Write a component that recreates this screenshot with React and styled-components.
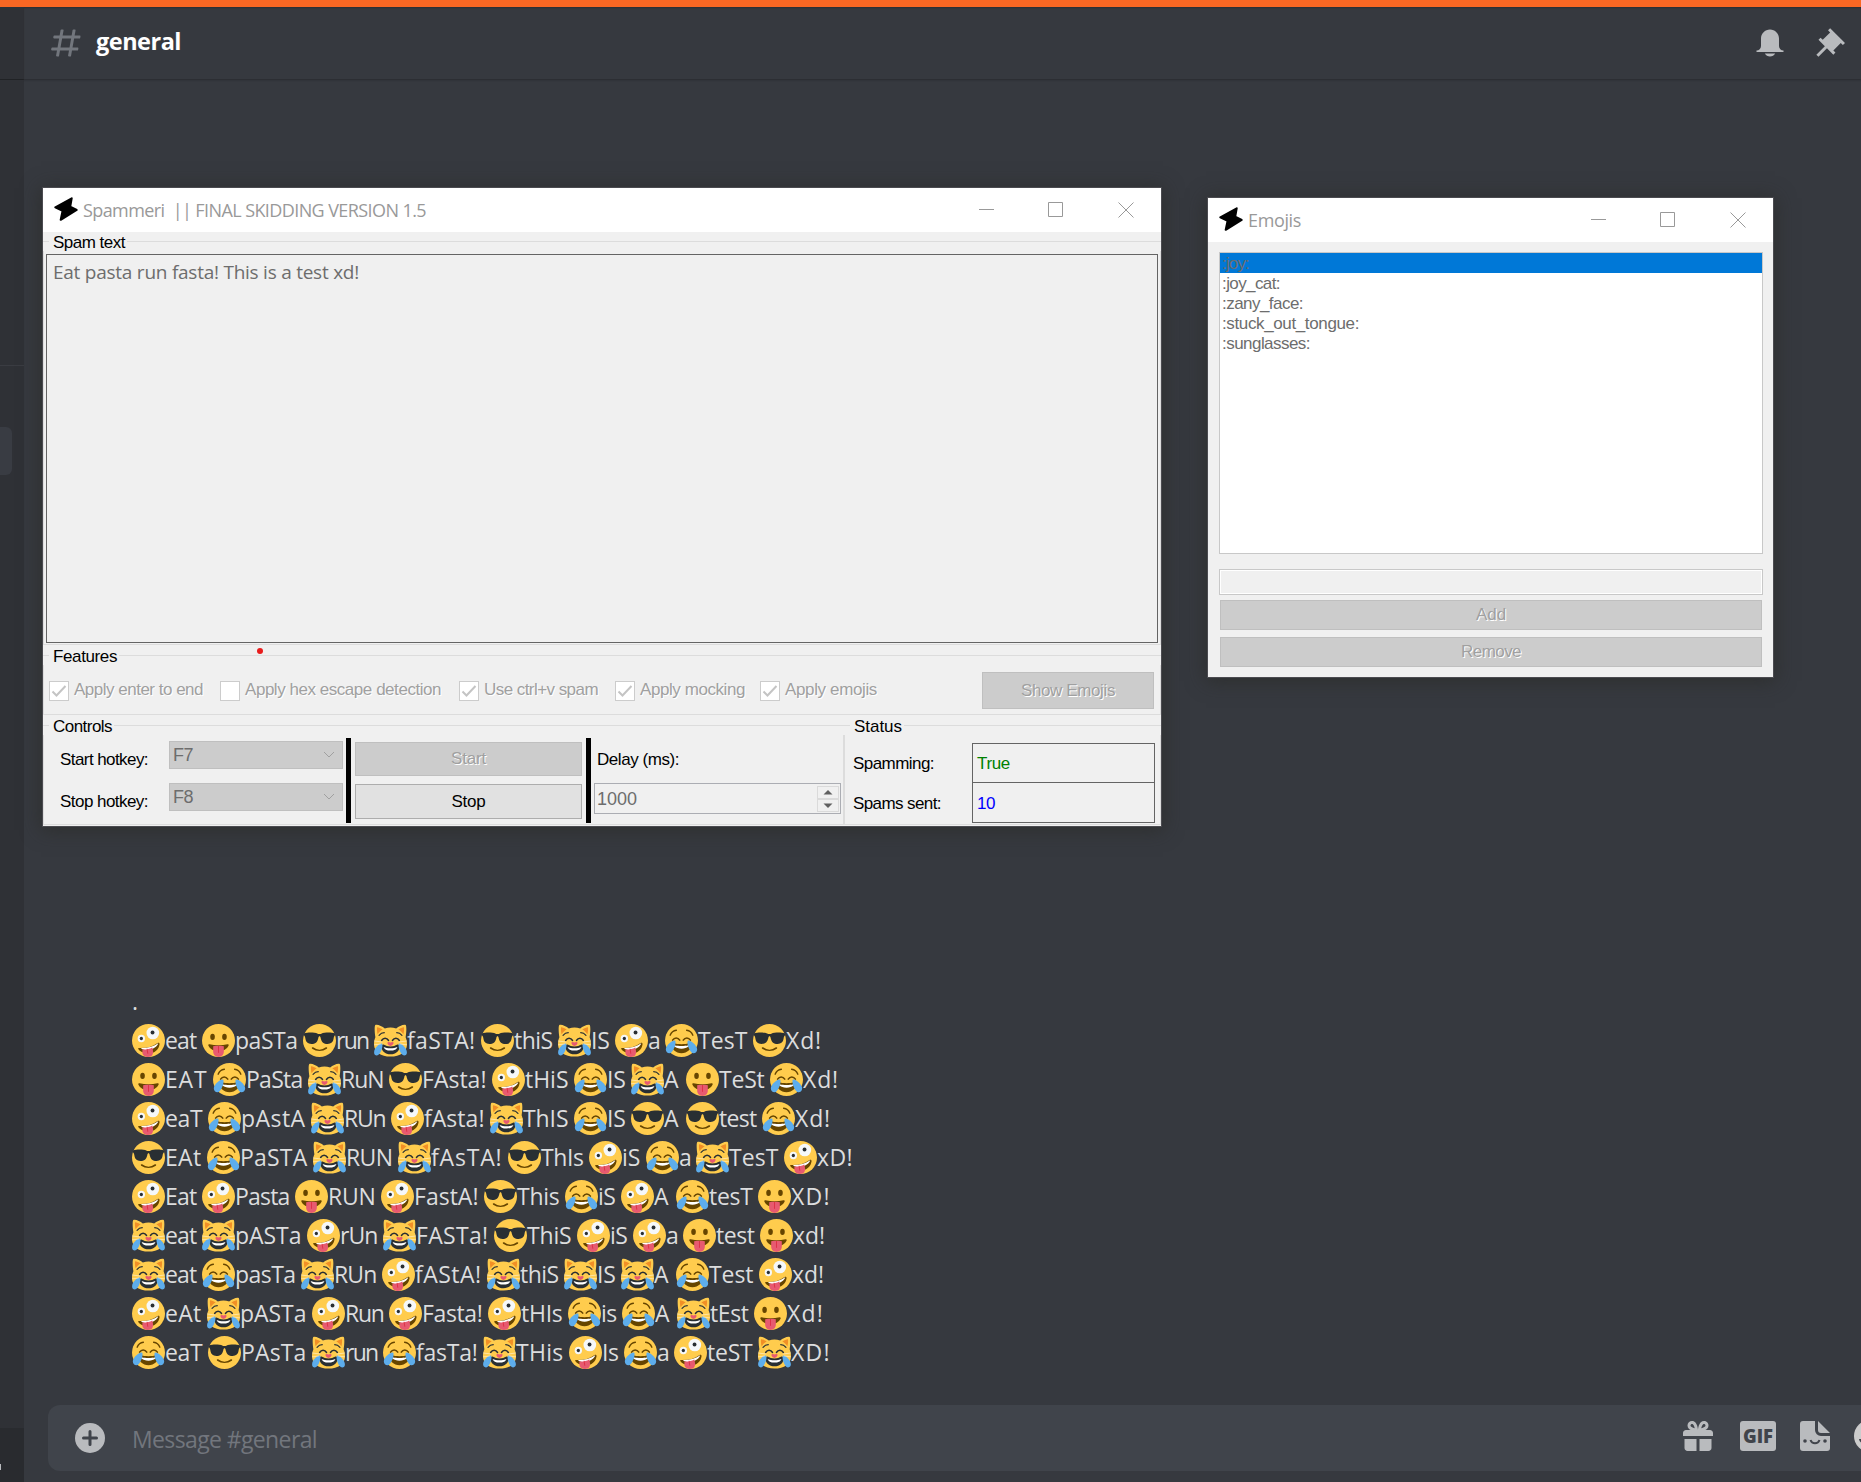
import React, { useLayoutEffect, useRef, useState } from "react";
import styled, { createGlobalStyle } from "styled-components";

const UI = `"Liberation Sans", Arial, sans-serif`;
const HUMANIST = `"Open Sans", "Noto Sans", sans-serif`;

const Global = createGlobalStyle`
  *, *::before, *::after { box-sizing: border-box; }
  html, body { margin: 0; padding: 0; background: #36393f; overflow: hidden; }
`;

/* ---------- text that is tracked to a given width ---------- */
const FitBox = styled.span`
  display: inline-block;
  white-space: pre;
`;

function Fit({ w, children, ...rest }) {
  const ref = useRef(null);
  const [spacing, setSpacing] = useState(0);
  useLayoutEffect(() => {
    const natural = ref.current.getBoundingClientRect().width;
    setSpacing((w - natural) / String(children).length);
  }, [w, children]);
  return (
    <FitBox ref={ref} style={{ letterSpacing: spacing }} {...rest}>
      {children}
    </FitBox>
  );
}

/* ---------- chat shell ---------- */
const Screen = styled.div`
  position: relative;
  width: 1861px;
  height: 1482px;
  display: flex;
  flex-direction: column;
  overflow: hidden;
  background: #36393f;
  font-family: ${HUMANIST};
`;
const Accent = styled.div`
  flex: none;
  height: 7px;
  background: #f96723;
`;
const Columns = styled.div`
  flex: 1;
  display: flex;
  min-height: 0;
`;
const Sidebar = styled.aside`
  flex: none;
  width: 24px;
  display: flex;
  flex-direction: column;
  background: #2f3136;
`;
const SideHeader = styled.div`
  height: 73px;
  border-bottom: 1px solid #202225;
`;
const SideSection = styled.div`
  height: 286px;
  border-bottom: 1px solid #3a3c42;
`;
const SideItem = styled.div`
  width: 12px;
  height: 48px;
  margin-top: 61px;
  border-radius: 0 6px 6px 0;
  background: #393c43;
`;
const SideUser = styled.div`
  height: 54px;
  margin-top: auto;
  padding-top: 36px;
  background: #292b2f;
`;
const SideUserTag = styled.div`
  width: 1px;
  height: 6px;
  background: #b9bbbe;
`;
const Main = styled.main`
  flex: 1;
  min-width: 0;
  display: flex;
  flex-direction: column;
`;
const Header = styled.header`
  flex: none;
  height: 72px;
  display: flex;
  align-items: flex-start;
  padding: 18px 13px 0 24px;
  box-shadow: 0 1px 0 #2c2e33, 0 2px 1px #31343a, inset 0 2px 2px -1px #2b2d31;
`;
const ChannelName = styled.h1`
  flex: 1;
  margin: -4px 0 0 12px;
  font-size: 23.5px;
  font-weight: 700;
  line-height: 40px;
  color: #fff;
`;
const HeaderIcons = styled.div`
  display: flex;
  gap: 24px;
  color: #b9bbbe;
`;
const Glyph = styled.svg`
  display: block;
  flex: none;
  width: ${(p) => p.$size || 36}px;
  height: ${(p) => p.$size || 36}px;
  color: ${(p) => p.$color || "inherit"};
  fill: currentColor;
`;

const Messages = styled.section`
  flex: 1;
  display: flex;
  flex-direction: column;
  justify-content: flex-end;
  padding: 0 0 33px 108px;
`;
const Line = styled.div`
  display: flex;
  align-items: center;
  height: 39px;
  font-size: 23px;
  line-height: 39px;
  color: #dcddde;
`;
const Token = styled.span`
  display: flex;
  align-items: center;
  flex: none;
  width: ${(p) => p.$w}px;
`;
const EmojiSvg = styled.svg`
  display: block;
  flex: none;
  width: 33px;
  height: 33px;
`;

const Composer = styled.div`
  flex: none;
  height: 66px;
  margin: 0 -20px 11px 24px;
  display: flex;
  align-items: center;
  border-radius: 12px;
  background: #40444b;
  padding-left: 27px;
  color: #b9bbbe;
`;
const PlusButton = styled.div`
  width: 30px;
  height: 30px;
  margin-top: 0;
`;
const Placeholder = styled.div`
  flex: 1;
  margin-left: 27px;
  font-size: 23px;
  line-height: 32px;
  padding-top: 1px;
  color: #72767d;
`;
const ComposerIcons = styled.div`
  display: flex;
  align-items: center;
  gap: 24px;
  width: 198px;
  margin-top: -4px;
`;
const GifBadge = styled.div`
  flex: none;
  width: 36px;
  height: 30px;
  margin-left: 3px;
  border-radius: 3px;
  background: #b9bbbe;
  color: #40444b;
  text-align: center;
  font-size: 18.5px;
  font-weight: 800;
  line-height: 30px;
`;

/* ---------- desktop windows ---------- */
const Window = styled.div`
  position: absolute;
  left: ${(p) => p.$x}px;
  top: ${(p) => p.$y}px;
  width: ${(p) => p.$w}px;
  height: ${(p) => p.$h}px;
  display: flex;
  flex-direction: column;
  background: #f0f0f0;
  font-family: ${UI};
  font-size: 17px;
  line-height: 20px;
  color: #000;
  box-shadow: 0 0 0 1px #4b4b50, 0 2px 18px 2px rgba(40, 40, 36, 0.62);
`;
const TitleBar = styled.div`
  flex: none;
  height: 44px;
  display: flex;
  background: #fff;
  padding: 0 0 0 11px;
  color: #999;
`;
const TitleIcon = styled.svg`
  width: 24px;
  height: 24px;
  margin-top: 9px;
`;
const Title = styled.div`
  flex: 1;
  margin: 10px 0 0 5px;
  font-family: ${HUMANIST};
  font-size: 18px;
  line-height: 24px;
  color: #999;
`;
const Caption = styled.svg`
  display: block;
  width: 16px;
  height: 16px;
  margin: 14px 0 0 ${(p) => p.$gap || 53}px;
  fill: none;
  stroke: #999;
  stroke-width: 1;
`;
const Captions = styled.div`
  display: flex;
  padding-right: 27px;
`;

const Group = styled.div`
  display: flex;
  flex-direction: column;
  width: ${(p) => (p.$w ? p.$w + "px" : "auto")};
  margin-top: ${(p) => p.$mt || 0}px;
`;
const GroupHead = styled.div`
  display: flex;
  align-items: center;
  height: 19px;
  line-height: 19px;
  &::before {
    content: "";
    width: 6px;
    height: 1px;
    background: #dcdcdc;
  }
  &::after {
    content: "";
    flex: 1;
    height: 1px;
    background: #dcdcdc;
  }
`;
const Legend = styled.div`
  padding: 1px 2px 0 4px;
  height: 20px;
`;
const GroupBody = styled.div`
  display: flex;
  height: ${(p) => p.$h}px;
  padding: ${(p) => p.$pad};
  border: 1px solid #dcdcdc;
  border-top: 0;
  align-items: ${(p) => p.$align || "stretch"};
`;
const SpamText = styled.div`
  flex: 1;
  border: 1px solid #646464;
  padding: 3px 0 0 6px;
  font-family: ${HUMANIST};
  font-size: 19px;
  line-height: 28px;
  color: #6d6d6d;
`;
const Check = styled.div`
  flex: none;
  display: flex;
  align-items: center;
  width: ${(p) => p.$w}px;
  color: #a0a0a0;
  text-shadow: 1px 1px 0 #fff;
`;
const CheckLabel = styled.div`
  padding-bottom: 2px;
`;
const CheckBox = styled.svg`
  width: 20px;
  height: 20px;
  margin-right: 5px;
  background: #fff;
  border: 1px solid #ccc;
  fill: none;
  stroke: #c4c4c4;
  stroke-width: 2;
`;
const Button = styled.div`
  flex: none;
  display: flex;
  align-items: center;
  justify-content: center;
  width: ${(p) => p.$w}px;
  height: ${(p) => p.$h}px;
  margin-left: ${(p) => p.$ml || 0};
  border: 1px solid ${(p) => (p.$enabled ? "#adadad" : "#bfbfbf")};
  background: ${(p) => (p.$enabled ? "#e1e1e1" : "#cccccc")};
  color: ${(p) => (p.$enabled ? "#000" : "#a0a0a0")};
  text-shadow: ${(p) => (p.$enabled ? "none" : "1px 1px 0 #fff")};
`;
const BottomRow = styled.div`
  display: flex;
`;
const Hotkeys = styled.div`
  display: flex;
  flex-direction: column;
  gap: 14px;
  padding-top: 6px;
`;
const HotkeyRow = styled.div`
  display: flex;
  height: 28px;
`;
const HotkeyLabel = styled.div`
  width: 109px;
  padding-top: 9px;
`;
const Combo = styled.div`
  width: 174px;
  height: 28px;
  display: flex;
  justify-content: space-between;
  align-items: center;
  padding: 0 7px 0 3px;
  border: 1px solid #bfbfbf;
  background: #ccc;
  font-size: 18px;
  color: #6d6d6d;
`;
const Chevron = styled.svg`
  width: 12px;
  height: 8px;
  fill: none;
  stroke: #a0a0a0;
`;
const Divider = styled.div`
  width: 5px;
  height: 85px;
  margin: 3px 4px 0 3px;
  background: #000;
`;
const Buttons = styled.div`
  display: flex;
  flex-direction: column;
  gap: 8px;
  padding: 7px 1px 0 0;
`;
const Delay = styled.div`
  padding-top: 15px;
  margin-left: -1px;
`;
const DelayLabel = styled.div`
  padding-left: 3px;
  height: 33px;
`;
const Spinner = styled.div`
  display: flex;
  align-items: center;
  justify-content: space-between;
  width: 247px;
  height: 31px;
  padding: 0 1px 0 2px;
  border: 1px solid #abadb3;
  font-size: 18px;
  color: #6d6d6d;
`;
const SpinButtons = styled.div`
  display: flex;
  flex-direction: column;
`;
const SpinButton = styled.svg`
  width: 22px;
  height: 13px;
  border: 1px solid #dadada;
  fill: #606060;
`;
const StatusRows = styled.div`
  display: flex;
  flex-direction: column;
  padding: 8px 0 0 8px;
`;
const StatusRow = styled.div`
  display: flex;
  align-items: center;
  height: ${(p) => p.$h}px;
  margin-bottom: -1px;
`;
const StatusLabel = styled.div`
  width: 119px;
  padding-top: 2px;
`;
const StatusValue = styled.div`
  display: flex;
  align-items: center;
  width: 183px;
  height: 100%;
  padding: 2px 0 0 4px;
  border: 1px solid #646464;
  color: ${(p) => p.$color};
`;
const RedDot = styled.div`
  position: absolute;
  left: 214px;
  top: 460px;
  width: 6px;
  height: 6px;
  border-radius: 50%;
  background: #e81c1c;
`;

const EmojiBody = styled.div`
  display: flex;
  flex-direction: column;
  padding: 10px 10px 0 11px;
`;
const List = styled.div`
  height: 302px;
  border: 1px solid #c8c8c8;
  background: #fff;
`;
const Item = styled.div`
  height: 20px;
  line-height: 22px;
  padding-left: 2px;
  color: #6d6d6d;
  background: ${(p) => (p.$selected ? "#0078d7" : "transparent")};
`;
const Input = styled.div`
  height: 26px;
  margin: 15px 0 5px;
  border: 1px solid #c8c8c8;
  box-shadow: inset 0 0 0 1px #fff;
`;
const StackedButton = styled(Button)`
  margin: 0 1px 7px;
`;

/* ---------- emoji artwork ---------- */
const Face = () => <circle cx="18" cy="18" r="18" fill="#ffcc4d" />;

const EMOJI = {
  joy: (
    <>
      <Face />
      <g fill="none" stroke="#664500" strokeLinecap="round">
        <path d="M5.6 12.2c1.2-3 3.4-5 6.8-5.4M30.4 12.2c-1.2-3-3.4-5-6.8-5.4" strokeWidth="1.5" />
        <path d="M8.3 17.6c1-1.6 2.3-2.4 3.9-2.4s2.900.8 3.900 2.400M19.900 17.600c1-1.600 2.300-2.400 3.900-2.400s2.900.8 3.900 2.400" strokeWidth="1.700" />
      </g>
      <path fill="#664500" d="M18 22c-3.600 0-6-.4-9-1-.7-.1-2 0-2 2 0 4 4.600 9 11 9s11-5 11-9c0-2-1.300-2.100-2-2-3 .6-5.400 1-9 1z" />
      <path fill="#fff" d="M9 23s3 1 9 1 9-1 9-1-2 4-9 4-9-4-9-4z" />
      <path fill="#5dadec" d="M11.200 18.300c-1.300-2-10.400 4.200-10.300 9.600.1 2.600 1.700 4.100 3.900 4.100 4 0 7.900-10.700 6.400-13.700zM24.800 18.300c1.300-2 10.400 4.200 10.300 9.600-.1 2.600-1.700 4.100-3.900 4.100-4 0-7.900-10.700-6.400-13.700z" />
    </>
  ),
  cat: (
    <>
      <path fill="#ffcc4d" d="M1.200 1.300C2.800-.4 8.600 2.200 11.800 4.800a20 20 0 0 1 12.400 0C27.400 2.200 33.200-.4 34.800 1.300c.9 2.300.4 8.900-.3 13.200C35.600 17 36 19.500 36 22c0 8.600-7.500 13.500-18 13.500S0 30.600 0 22c0-2.500.4-5 1.500-7.500C.8 10.200.3 3.600 1.200 1.300z" />
      <path fill="#f18f26" d="M3.300 3.500c1.700 0 4.600 1.300 6.200 2.600-2 1-4.200 2.900-5.500 5-.7-2-1-5.400-.7-7.600zM32.700 3.500c-1.700 0-4.600 1.300-6.200 2.600 2 1 4.200 2.900 5.500 5 .7-2 1-5.400.7-7.600z" />
      <g fill="none" stroke="#292f33" strokeLinecap="round" strokeWidth="1.300">
        <path d="M5.500 12.400c1.700-2 3.500-2.900 5.700-2.900M30.500 12.400c-1.700-2-3.500-2.900-5.700-2.900" />
        <path d="M8.300 18c1-1.600 2.300-2.400 3.800-2.400s2.800.8 3.800 2.400M20.100 18c1-1.600 2.300-2.400 3.800-2.400s2.800.8 3.800 2.400" strokeWidth="1.600" />
      </g>
      <path fill="#292f33" d="M18 24.500c-3 0-5.500-1-7-1.900-1.500-.7-2.900.2-2.900 1.900 0 4.800 4 8.500 9.900 8.500s9.900-3.700 9.900-8.500c0-1.700-1.400-2.600-2.900-1.900-1.500.9-4 1.900-7 1.900z" />
      <path fill="#fff" d="M10.500 25c2 1 4.700 1.400 7.500 1.400s5.500-.4 7.500-1.400c-.5 2.500-3.500 4-7.500 4s-7-1.500-7.500-4z" />
      <path fill="#e75a70" d="M14.700 20.200c.5-1 2.300-.8 3.300 0 1-.8 2.800-1 3.300 0 .6 1.300-1.900 3.700-3.300 3.700s-3.900-2.400-3.300-3.700z" />
      <path fill="#5dadec" d="M8.900 21.600C7.600 20.200.3 25.500.1 30.700 0 33 1.300 34.300 3.100 34.300c3.800 0 7.200-9.900 5.800-12.700zM27.100 21.600c1.300-1.400 8.600 3.900 8.800 9.100.1 2.300-1.200 3.600-3 3.600-3.800 0-7.200-9.900-5.800-12.700z" />
      <path fill="none" stroke="#fff" strokeOpacity=".75" strokeWidth=".7" d="M0 18.500l9 1.200M0 22.800l8-1M36 18.500l-9 1.200M36 22.800l-8-1" />
    </>
  ),
  cool: (
    <>
      <Face />
      <path fill="none" stroke="#664500" strokeWidth="1.800" strokeLinecap="round" d="M10.500 26.200c4.500 3.300 10.500 3.300 15 0" />
      <path fill="#292f33" d="M1.500 10.200c3.500-1.300 11-1.200 14.500.3.900.4 3.100.4 4 0 3.500-1.500 11-1.600 14.500-.3.600.3.600 1.900.1 2.500-.8.700-.9 1.300-1.200 3.200-.6 4-2.600 5.800-6.600 5.800-4.200 0-6.400-1.900-7.400-6-.4-1.700-.7-2.300-1.400-2.300s-1 .6-1.400 2.300c-1 4.100-3.200 6-7.400 6-4 0-6-1.800-6.600-5.800-.3-1.900-.4-2.500-1.200-3.200-.5-.6-.5-2.200.1-2.500z" />
    </>
  ),
  tongue: (
    <>
      <Face />
      <ellipse cx="11.500" cy="14" rx="2.500" ry="3.500" fill="#664500" />
      <ellipse cx="24.500" cy="14" rx="2.500" ry="3.500" fill="#664500" />
      <path fill="#664500" d="M8.200 22.200c3.100.7 6.400 1 9.800 1s6.700-.3 9.800-1c1-.2 1.600.6 1.200 1.500-1.600 3.300-5.800 6.100-11 6.100S8.600 27 7 23.700c-.4-.9.2-1.700 1.200-1.500z" />
      <path fill="#e75a70" d="M12.200 24.200c3.700-.7 7.900-.7 11.600 0v6.200c0 3.200-2.600 5.600-5.800 5.600s-5.800-2.400-5.800-5.600z" />
      <path stroke="#dd2e44" strokeWidth="1" strokeLinecap="round" d="M18 24.500v6.500" />
    </>
  ),
  zany: (
    <>
      <Face />
      <path fill="#664500" d="M7.800 26.200c7.900.3 14.400-1.500 20.200-5.600 1-.7 2.200.1 2.100 1.300-.8 6.700-6.300 10.600-12.600 10.100-5.500-.4-9-2.400-10.500-4.500-.5-.8-.1-1.400.8-1.300z" />
      <path fill="#fff" d="M9.800 26.200c7.400.1 13-1.500 18.800-5.300-.3 2.700-5.400 7.300-12.400 7.600-2.600.1-5.300-.7-6.400-2.300z" />
      <path fill="#e75a70" d="M11.300 27.800c3.600.4 7.600-.4 10.800-2.200.9 2.800 1.400 6 .1 8.200-1.100 1.800-3.500 2.300-5.700 2.200-2.700-.1-4.600-1.600-5.100-4z" />
      <path stroke="#dd2e44" strokeWidth="1" strokeLinecap="round" fill="none" d="M16.500 27.500l.7 4.500" />
      <circle cx="22.700" cy="9.800" r="6.900" fill="#f5f8fa" />
      <circle cx="22.400" cy="9.300" r="2.100" fill="#292f33" />
      <circle cx="10.200" cy="15.800" r="4" fill="#f5f8fa" />
      <circle cx="10.200" cy="15.800" r="1.800" fill="#292f33" />
    </>
  ),
};

function Emoji({ kind }) {
  return <EmojiSvg viewBox="0 0 36 36">{EMOJI[kind]}</EmojiSvg>;
}

/* each line: tokens [emoji, word, advance in px] */
const LINES = [
  [["zany", "eat", 70], ["tongue", "paSTa", 101], ["cool", "run", 71], ["cat", "faSTA!", 107], ["cool", "thiS", 77], ["cat", "IS", 57], ["zany", "a", 50], ["joy", "TesT", 88], ["cool", "Xd!", 73]],
  [["tongue", "EAT", 81], ["joy", "PaSta", 95], ["cat", "RuN", 81], ["cool", "FAsta!", 103], ["zany", "tHiS", 82], ["joy", "IS", 57], ["cat", "A", 55], ["tongue", "TeSt", 84], ["joy", "Xd!", 73]],
  [["zany", "eaT", 76], ["joy", "pAstA", 103], ["cat", "RUn", 80], ["zany", "fAsta!", 99], ["cat", "ThIS", 84], ["joy", "IS", 57], ["cool", "A", 55], ["cool", "test", 76], ["joy", "Xd!", 73]],
  [["cool", "EAt", 75], ["joy", "PaSTA", 106], ["cat", "RUN", 85], ["cat", "fAsTA!", 110], ["cool", "ThIs", 81], ["zany", "iS", 57], ["joy", "a", 50], ["cat", "TesT", 88], ["zany", "xD!", 73]],
  [["zany", "Eat", 70], ["zany", "Pasta", 93], ["tongue", "RUN", 86], ["zany", "FastA!", 103], ["cool", "This", 81], ["joy", "iS", 56], ["zany", "A", 55], ["joy", "tesT", 82], ["tongue", "XD!", 77]],
  [["cat", "eat", 70], ["cat", "pASTa", 105], ["zany", "rUn", 76], ["cat", "FASTa!", 111], ["cool", "ThiS", 83], ["zany", "iS", 56], ["zany", "a", 50], ["tongue", "test", 77], ["tongue", "xd!", 69]],
  [["cat", "eat", 70], ["joy", "pasTa", 99], ["cat", "RUn", 81], ["zany", "fAStA!", 105], ["cat", "thiS", 77], ["cat", "IS", 57], ["cat", "A", 55], ["joy", "Test", 83], ["zany", "xd!", 69]],
  [["zany", "eAt", 75], ["cat", "pASTa", 105], ["zany", "Run", 77], ["zany", "Fasta!", 99], ["zany", "tHIs", 80], ["joy", "is", 54], ["joy", "A", 55], ["cat", "tEst", 77], ["tongue", "Xd!", 74]],
  [["joy", "eaT", 76], ["cool", "PAsTa", 104], ["cat", "run", 71], ["joy", "fasTa!", 100], ["cat", "THis", 86], ["zany", "Is", 55], ["joy", "a", 50], ["zany", "teST", 84], ["cat", "XD!", 77]],
];

const CHECKS = [
  ["Apply enter to end", true, 171, 129],
  ["Apply hex escape detection", false, 239, 196],
  ["Use ctrl+v spam", true, 156, 114],
  ["Apply mocking", true, 145, 105],
  ["Apply emojis", true, 130, 92],
];

const NAMES = [
  [":joy:", 27],
  [":joy_cat:", 58],
  [":zany_face:", 81],
  [":stuck_out_tongue:", 137],
  [":sunglasses:", 88],
];

function WindowTitle({ text, width }) {
  return (
    <TitleBar>
      <TitleIcon viewBox="0 0 24 24">
        <path d="M17.700 1.300L1.300 10.300l7.300 3.500-1.900 9L22.700 13l-6.500-3.300z" fill="#000" stroke="#000" strokeWidth="2" strokeLinejoin="round" />
      </TitleIcon>
      <Title>
        <Fit w={width}>{text}</Fit>
      </Title>
      <Captions>
        <Caption viewBox="0 0 16 16"><path d="M0 7.500h15" /></Caption>
        <Caption viewBox="0 0 16 16"><path d="M.5.5h14v14H.5z" /></Caption>
        <Caption viewBox="0 0 16 16" $gap={54}><path d="M.5.5l15 15M15.500.5l-15 15" /></Caption>
      </Captions>
    </TitleBar>
  );
}

function ComboBox({ value }) {
  return (
    <Combo>
      <Fit w={20}>{value}</Fit>
      <Chevron viewBox="0 0 12 8"><path d="M1 1l5 5 5-5" /></Chevron>
    </Combo>
  );
}

function SpammerWindow() {
  return (
    <Window $x={43} $y={188} $w={1118} $h={638}>
      <WindowTitle text="Spammeri  || FINAL SKIDDING VERSION 1.5" width={343} />
      <Group>
        <GroupHead><Legend><Fit w={72}>Spam text</Fit></Legend></GroupHead>
        <GroupBody $h={394} $pad="3px 2px 1px">
          <SpamText><Fit w={306}>Eat pasta run fasta! This is a test xd!</Fit></SpamText>
        </GroupBody>
      </Group>
      <Group $mt={1}>
        <GroupHead><Legend><Fit w={64}>Features</Fit></Legend></GroupHead>
        <GroupBody $h={50} $pad="2px 6px 0 5px" $align="center">
          {CHECKS.map(([label, on, w, tw]) => (
            <Check key={label} $w={w}>
              <CheckBox viewBox="0 0 18 18">{on && <path d="M2.500 9.500l4 4 9-9.500" />}</CheckBox>
              <CheckLabel><Fit w={tw}>{label}</Fit></CheckLabel>
            </Check>
          ))}
          <Button $w={172} $h={37} $ml="auto"><Fit w={94}>Show Emojis</Fit></Button>
        </GroupBody>
      </Group>
      <BottomRow>
        <Group $w={801} $mt={1}>
          <GroupHead><Legend><Fit w={59}>Controls</Fit></Legend></GroupHead>
          <GroupBody $h={90} $pad="0 0 0 16px">
            <Hotkeys>
              <HotkeyRow>
                <HotkeyLabel><Fit w={88}>Start hotkey:</Fit></HotkeyLabel>
                <ComboBox value="F7" />
              </HotkeyRow>
              <HotkeyRow>
                <HotkeyLabel><Fit w={88}>Stop hotkey:</Fit></HotkeyLabel>
                <ComboBox value="F8" />
              </HotkeyRow>
            </Hotkeys>
            <Divider />
            <Buttons>
              <Button $w={227} $h={34}><Fit w={35}>Start</Fit></Button>
              <Button $w={227} $h={35} $enabled><Fit w={34}>Stop</Fit></Button>
            </Buttons>
            <Divider />
            <Delay>
              <DelayLabel><Fit w={82}>Delay (ms):</Fit></DelayLabel>
              <Spinner>
                <Fit w={40}>1000</Fit>
                <SpinButtons>
                  <SpinButton viewBox="0 0 20 11"><path d="M5.500 7.500L10 3l4.500 4.500z" /></SpinButton>
                  <SpinButton viewBox="0 0 20 11"><path d="M5.500 3.500L10 8l4.500-4.500z" /></SpinButton>
                </SpinButtons>
              </Spinner>
            </Delay>
          </GroupBody>
        </Group>
        <Group $w={317} $mt={1}>
          <GroupHead><Legend><Fit w={48}>Status</Fit></Legend></GroupHead>
          <GroupBody $h={90} $pad="0">
            <StatusRows>
              <StatusRow $h={40}>
                <StatusLabel><Fit w={81}>Spamming:</Fit></StatusLabel>
                <StatusValue $color="#008000"><Fit w={33}>True</Fit></StatusValue>
              </StatusRow>
              <StatusRow $h={41}>
                <StatusLabel><Fit w={88}>Spams sent:</Fit></StatusLabel>
                <StatusValue $color="#0000ff"><Fit w={18}>10</Fit></StatusValue>
              </StatusRow>
            </StatusRows>
          </GroupBody>
        </Group>
      </BottomRow>
      <RedDot />
    </Window>
  );
}

function EmojiWindow() {
  return (
    <Window $x={1208} $y={198} $w={565} $h={479}>
      <WindowTitle text="Emojis" width={53} />
      <EmojiBody>
        <List>
          {NAMES.map(([name, w], i) => (
            <Item key={name} $selected={i === 0}><Fit w={w}>{name}</Fit></Item>
          ))}
        </List>
        <Input />
        <StackedButton $w={542} $h={30}><Fit w={30}>Add</Fit></StackedButton>
        <StackedButton $w={542} $h={30}><Fit w={60}>Remove</Fit></StackedButton>
      </EmojiBody>
    </Window>
  );
}

export default function App() {
  return (
    <>
      <Global />
      <Screen>
        <Accent />
        <Columns>
          <Sidebar>
            <SideHeader />
            <SideSection />
            <SideItem />
            <SideUser><SideUserTag /></SideUser>
          </Sidebar>
          <Main>
            <Header>
              <Glyph viewBox="0 0 24 24" $color="#72767d">
                <path fillRule="evenodd" d="M5.88657 21C5.57547 21 5.3399 20.7189 5.39427 20.4126L6.00001 17H2.59511C2.28449 17 2.04905 16.7198 2.10259 16.4138L2.27759 15.4138C2.31946 15.1746 2.52722 15 2.77011 15H6.35001L7.41001 9H4.00511C3.69449 9 3.45905 8.71977 3.51259 8.41381L3.68759 7.41381C3.72946 7.17456 3.93722 7 4.18011 7H7.76001L8.39677 3.41262C8.43914 3.17391 8.64664 3 8.88907 3H9.87344C10.1845 3 10.4201 3.28107 10.3657 3.58738L9.76001 7H15.76L16.3968 3.41262C16.4391 3.17391 16.6466 3 16.8891 3H17.8734C18.1845 3 18.4201 3.28107 18.3657 3.58738L17.76 7H21.1649C21.4755 7 21.711 7.28023 21.6574 7.58619L21.4824 8.58619C21.4406 8.82544 21.2328 9 20.9899 9H17.41L16.35 15H19.7549C20.0655 15 20.301 15.2802 20.2474 15.5862L20.0724 16.5862C20.0306 16.8254 19.8228 17 19.5799 17H16L15.3632 20.5874C15.3209 20.8261 15.1134 21 14.8709 21H13.8866C13.5755 21 13.3399 20.7189 13.3943 20.4126L14 17H8.00001L7.36325 20.5874C7.32088 20.8261 7.11337 21 6.87094 21H5.88657ZM9.41045 9L8.35045 15H14.3504L15.4104 9H9.41045Z" />
              </Glyph>
              <ChannelName><Fit w={85}>general</Fit></ChannelName>
              <HeaderIcons>
                <Glyph viewBox="0 0 24 24">
                  <path d="M18 9V14C18 15.657 19.344 17 21 17V18H3V17C4.656 17 6 15.657 6 14V9C6 5.686 8.686 3 12 3C15.314 3 18 5.686 18 9ZM11.9999 21C10.5239 21 9.24793 20.19 8.55493 19H15.4449C14.7519 20.19 13.4759 21 11.9999 21Z" />
                </Glyph>
                <Glyph viewBox="0 0 24 24">
                  <path d="M22 12L12.101 2.10101L10.686 3.51401L12.101 4.92901L7.15096 9.87801V9.88001L5.73596 8.46501L4.32196 9.88001L8.56496 14.122L2.90796 19.778L4.32196 21.192L9.97896 15.536L14.222 19.778L15.636 18.364L14.222 16.95L19.171 12H19.172L20.586 13.414L22 12Z" />
                </Glyph>
              </HeaderIcons>
            </Header>
            <Messages>
              <Line>.</Line>
              {LINES.map((tokens, i) => (
                <Line key={i}>
                  {tokens.map(([kind, word, w], j) => (
                    <Token key={j} $w={w}>
                      <Emoji kind={kind} />
                      <Fit w={j === tokens.length - 1 ? w - 37 : w - 38.5}>{word}</Fit>
                    </Token>
                  ))}
                </Line>
              ))}
            </Messages>
            <Composer>
              <PlusButton>
                <Glyph viewBox="0 0 30 30" $size={30}>
                  <circle cx="15" cy="15" r="15" />
                  <path d="M15 8.500v13M8.500 15h13" stroke="#40444b" strokeWidth="3" strokeLinecap="round" />
                </Glyph>
              </PlusButton>
              <Placeholder><Fit w={185}>Message #general</Fit></Placeholder>
              <ComposerIcons>
                <Glyph viewBox="2 2 20 20" $size={30}>
                  <path fillRule="evenodd" d="M16.886 7.999H20C21.104 7.999 22 8.896 22 9.999V11.999H2V9.999C2 8.896 2.897 7.999 4 7.999H7.114C6.663 7.764 6.236 7.477 5.879 7.121C4.709 5.951 4.709 4.048 5.879 2.879C7.012 1.746 8.986 1.746 10.121 2.877C11.758 4.514 11.979 7.595 11.998 7.941L11.99 7.999H12.01L12.002 7.941C12.022 7.596 12.242 4.515 13.879 2.878C15.014 1.745 16.986 1.746 18.121 2.877C19.29 4.049 19.29 5.952 18.121 7.121C17.764 7.477 17.337 7.764 16.886 7.999ZM7.293 5.707C6.903 5.316 6.903 4.682 7.293 4.292C7.481 4.103 7.732 4 8 4C8.268 4 8.519 4.103 8.707 4.292C9.297 4.882 9.641 5.94 9.825 6.822C8.945 6.639 7.879 6.293 7.293 5.707ZM14.174 6.824C14.359 5.941 14.702 4.883 15.293 4.293C15.481 4.103 15.732 4 16 4C16.268 4 16.519 4.103 16.706 4.291C17.096 4.682 17.097 5.316 16.707 5.707C16.116 6.298 15.057 6.642 14.174 6.824ZM3 13.999V19.999C3 21.102 3.897 21.999 5 21.999H11V13.999H3ZM13 13.999V21.999H19C20.104 21.999 21 21.102 21 19.999V13.999H13Z" />
                </Glyph>
                <GifBadge>GIF</GifBadge>
                <Glyph viewBox="0 0 30 30" $size={30}>
                  <path d="M3 0h12v9a6 6 0 0 0 6 6h9v12a3 3 0 0 1-3 3H3a3 3 0 0 1-3-3V3a3 3 0 0 1 3-3zM18 0l12 12h-9a3 3 0 0 1-3-3z" />
                  <g fill="#40444b"><circle cx="5" cy="20" r="1.800" /><circle cx="25" cy="20" r="1.800" /></g>
                  <path d="M10.500 19c1.500 4.300 7.500 4.300 9 0" fill="none" stroke="#40444b" strokeWidth="2" />
                </Glyph>
                <Glyph viewBox="0 0 32 32" $size={32} $color="#cccccc">
                  <circle cx="16" cy="16" r="16" />
                  <path d="M5 19c1 8 21 8 22 0z" fill="#40444b" />
                </Glyph>
              </ComposerIcons>
            </Composer>
          </Main>
        </Columns>
        <SpammerWindow />
        <EmojiWindow />
      </Screen>
    </>
  );
}
